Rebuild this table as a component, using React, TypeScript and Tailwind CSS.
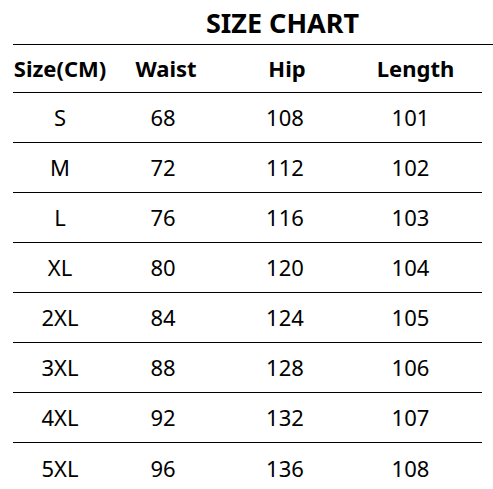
const rows = [
  ["S", "68", "108", "101"],
  ["M", "72", "112", "102"],
  ["L", "76", "116", "103"],
  ["XL", "80", "120", "104"],
  ["2XL", "84", "124", "105"],
  ["3XL", "88", "128", "106"],
  ["4XL", "92", "132", "107"],
  ["5XL", "96", "136", "108"],
]

const cols = "grid grid-cols-[94px_118px_124px_133px]"

export default function App() {
  return (
    <div className="w-[493px] h-[489px] overflow-hidden bg-white text-black font-['Noto_Sans',sans-serif]">
      <h1 className="h-[44px] pl-[72px] flex items-center justify-center text-[27px] font-bold leading-none">
        SIZE CHART
      </h1>
      <div className="ml-[13px] border-t border-black">
        <div className={`${cols} h-[48px] items-center w-[469px] border-b border-black text-[22px] font-bold`}>
          <span className="text-center">Size(CM)</span>
          <span className="text-center">Waist</span>
          <span className="text-center">Hip</span>
          <span className="text-center">Length</span>
        </div>
        {rows.map((r, i) => (
          <div
            key={i}
            className={`${cols} h-[50px] items-center w-[469px] text-[22px] font-normal ${i < rows.length - 1 ? "border-b border-black" : ""}`}
          >
            <span className="text-center">{r[0]}</span>
            <span className="text-center pr-[6px]">{r[1]}</span>
            <span className="text-center pr-[4px]">{r[2]}</span>
            <span className="text-center pr-[10px]">{r[3]}</span>
          </div>
        ))}
      </div>
    </div>
  )
}
